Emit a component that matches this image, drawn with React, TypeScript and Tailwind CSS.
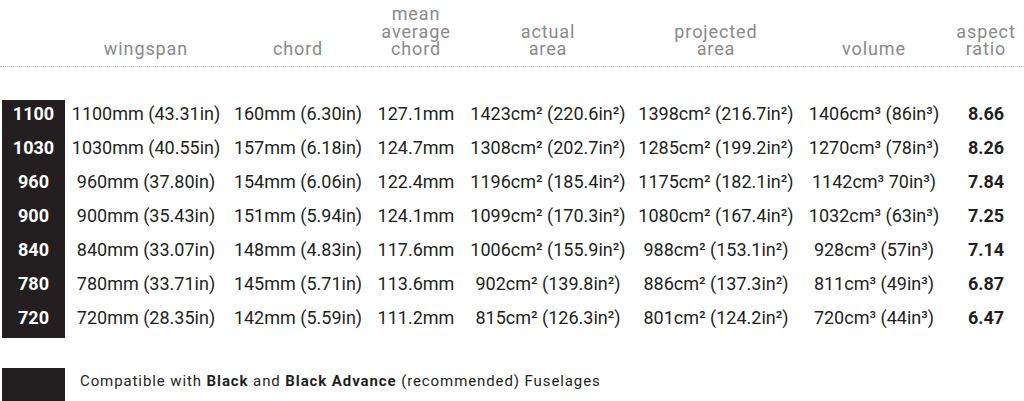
const rows = [
  { size: '1100', span: '1100mm (43.31in)', chord: '160mm (6.30in)', mac: '127.1mm', actual: '1423cm² (220.6in²)', projected: '1398cm² (216.7in²)', volume: '1406cm³ (86in³)', ratio: '8.66' },
  { size: '1030', span: '1030mm (40.55in)', chord: '157mm (6.18in)', mac: '124.7mm', actual: '1308cm² (202.7in²)', projected: '1285cm² (199.2in²)', volume: '1270cm³ (78in³)', ratio: '8.26' },
  { size: '960', span: '960mm (37.80in)', chord: '154mm (6.06in)', mac: '122.4mm', actual: '1196cm² (185.4in²)', projected: '1175cm² (182.1in²)', volume: '1142cm³ 70in³)', ratio: '7.84' },
  { size: '900', span: '900mm (35.43in)', chord: '151mm (5.94in)', mac: '124.1mm', actual: '1099cm² (170.3in²)', projected: '1080cm² (167.4in²)', volume: '1032cm³ (63in³)', ratio: '7.25' },
  { size: '840', span: '840mm (33.07in)', chord: '148mm (4.83in)', mac: '117.6mm', actual: '1006cm² (155.9in²)', projected: '988cm² (153.1in²)', volume: '928cm³ (57in³)', ratio: '7.14' },
  { size: '780', span: '780mm (33.71in)', chord: '145mm (5.71in)', mac: '113.6mm', actual: '902cm² (139.8in²)', projected: '886cm² (137.3in²)', volume: '811cm³ (49in³)', ratio: '6.87' },
  { size: '720', span: '720mm (28.35in)', chord: '142mm (5.59in)', mac: '111.2mm', actual: '815cm² (126.3in²)', projected: '801cm² (124.2in²)', volume: '720cm³ (44in³)', ratio: '6.47' },
];

const headers = [
  ['wingspan'],
  ['chord'],
  ['mean', 'average', 'chord'],
  ['actual', 'area'],
  ['projected', 'area'],
  ['volume'],
  ['aspect', 'ratio'],
];

const cols = 'grid grid-cols-[63px_162px_142px_94px_170px_166px_150px_74px]';

const Cell = ({ children, bold }: { children: React.ReactNode; bold?: boolean }) => (
  <div className={`h-[34px] pt-[3px] leading-[22px] text-center whitespace-nowrap ${bold ? 'font-bold' : ''}`}>
    {children}
  </div>
);

export default function App() {
  return (
    <div className="w-[1024px] h-[401px] overflow-hidden bg-white text-[#231f20] font-['Roboto',sans-serif]">
      <div className={`${cols} ml-[2px] pt-[5px] text-[18px] tracking-[0.05em] text-[#8a8a8a]`}>
        <div />
        {headers.map((h, i) => (
          <div key={i} className="flex flex-col justify-end items-center text-center">
            {h.map((line) => (
              <span key={line} className="block h-[17.5px] leading-[17.5px]">
                {line}
              </span>
            ))}
          </div>
        ))}
      </div>

      <div className="mt-[8px] border-t border-dotted border-[#b5b5b5]" />

      <div className={`${cols} ml-[2px] mt-[33px] text-[18px]`}>
        {rows.map((r) => (
          <div key={r.size} className="contents">
            <div className="h-[34px] pt-[3px] leading-[22px] bg-[#231f20] text-white font-bold text-center">{r.size}</div>
            <Cell>{r.span}</Cell>
            <Cell>{r.chord}</Cell>
            <Cell>{r.mac}</Cell>
            <Cell>{r.actual}</Cell>
            <Cell>{r.projected}</Cell>
            <Cell>{r.volume}</Cell>
            <Cell bold>{r.ratio}</Cell>
          </div>
        ))}
      </div>

      <div className="flex items-start mt-[30px] ml-[2px]">
        <div className="w-[63px] h-[40px] bg-[#231f20]" />
        <p className="ml-[15px] pt-[3px] text-[15px] leading-[20px] tracking-[0.06em] text-[#231f20]">
          Compatible with <b>Black</b> and <b>Black Advance</b> (recommended) Fuselages
        </p>
      </div>
    </div>
  );
}
